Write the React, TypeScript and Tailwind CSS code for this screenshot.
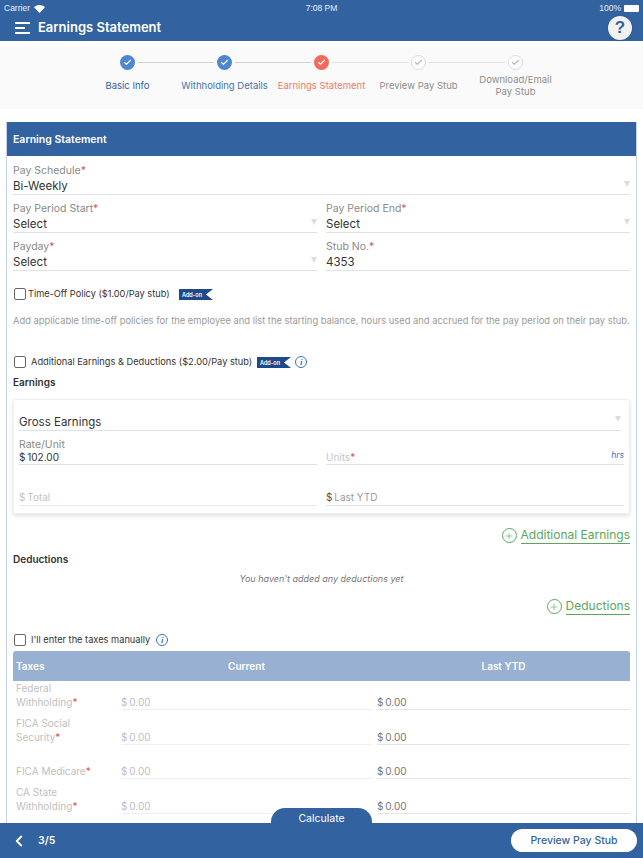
import { Check, ChevronLeft, Plus } from "lucide-react";

const STEPS = [
  { label: "Basic Info", state: "done" },
  { label: "Withholding Details", state: "done" },
  { label: "Earnings Statement", state: "active" },
  { label: "Preview Pay Stub", state: "todo" },
  { label: "Download/Email Pay Stub", state: "todo" },
];

const TAXES = ["Federal Withholding", "FICA Social Security", "FICA Medicare", "CA State Withholding"];

function Req() {
  return <span className="text-[#e0505a]">*</span>;
}

function Caret() {
  return <span className="block w-0 h-0 border-x-[3px] border-x-transparent border-t-[6px] border-t-[#dcdcdc] shrink-0" />;
}

function Field({ label, value, caret }: { label: string; value: string; caret?: boolean }) {
  return (
    <div className="flex-1 min-w-0 mb-[6px]">
      <div className="h-[15px] leading-[15px] text-[10.5px] text-[#8a8a8a]">
        {label}
        <Req />
      </div>
      <div className="flex items-start justify-between h-[17px] border-b border-[#dfe1e6]">
        <span className="text-[11.5px] leading-[16px] text-[#333]">{value}</span>
        {caret && <span className="mt-[3px]"><Caret /></span>}
      </div>
    </div>
  );
}

function Checkbox() {
  return <span className="w-3 h-3 rounded-[2px] border border-[#666] bg-white shrink-0" />;
}

function AddOn() {
  return (
    <svg width="34" height="11" viewBox="0 0 34 11" className="shrink-0">
      <path d="M0 0H34L27 5.5L34 11H0Z" fill="#1f4a8a" />
      <text x="3" y="7.5" fontSize="5.5" fontWeight="600" fill="#fff" fontFamily="Inter, sans-serif">Add-on</text>
    </svg>
  );
}

function InfoIcon() {
  return (
    <span className="w-[12px] h-[12px] rounded-full border border-[#3a74b8] flex items-center justify-center text-[9px] leading-none italic font-bold text-[#3a74b8] font-['Liberation_Serif',serif] shrink-0">
      i
    </span>
  );
}

function AddLink({ label }: { label: string }) {
  return (
    <div className="flex items-center justify-end gap-[4px]">
      <span className="w-[15px] h-[15px] rounded-full border border-[#5ba65b] flex items-center justify-center shrink-0">
        <Plus className="w-[10px] h-[10px] text-[#5ba65b]" strokeWidth={1.5} />
      </span>
      <span className="text-[12px] leading-[16px] text-[#5ba65b] border-b border-[#5ba65b]">{label}</span>
    </div>
  );
}

export default function App() {
  return (
    <div className="relative w-[643px] h-[858px] overflow-hidden bg-white flex flex-col font-['Inter',sans-serif]">
      {/* Status bar + title */}
      <div className="h-[41px] bg-[#32629f] shrink-0 flex flex-col">
        <div className="h-[17px] px-[4px] flex items-center justify-between text-[8.5px] text-white/90 font-['Liberation_Sans',sans-serif]">
          <div className="flex items-center gap-[4px] w-[100px]">
            Carrier
            <svg width="11" height="8" viewBox="0 0 11 8">
              <path d="M5.5 8L0 2.2C3 -.7 8 -.7 11 2.2Z" fill="#fff" />
            </svg>
          </div>
          <span>7:08 PM</span>
          <div className="flex items-center justify-end gap-[3px] w-[100px]">
            100%
            <span className="w-[15px] h-[7px] rounded-[1px] bg-white" />
          </div>
        </div>
        <div className="flex-1 flex items-start pl-[15px] pr-[11px]">
          <div className="flex flex-col gap-[3px] w-[15px] mt-[5px]">
            <span className="h-[2px] w-[15px] bg-white" />
            <span className="h-[2px] w-[10px] bg-white" />
            <span className="h-[2px] w-[15px] bg-white" />
          </div>
          <span className="ml-[8px] text-[13px] leading-[20px] font-semibold text-white">Earnings Statement</span>
          <span className="ml-auto relative z-10 mt-[-1px] w-[24px] h-[24px] rounded-full bg-[#f2f2f2] shadow flex items-center justify-center text-[17px] font-bold text-[#32629f] font-['Liberation_Sans',sans-serif]">
            ?
          </span>
        </div>
      </div>

      {/* Stepper */}
      <div className="mt-[6px] h-[62px] bg-[#fafafa] shrink-0 flex justify-center pt-[8px]">
        {STEPS.map((s, i) => (
          <div key={s.label} className="w-[97px] flex flex-col items-center">
            <div className="w-full flex items-center">
              <span className={`flex-1 h-px ${i === 0 ? "" : i < 3 ? "bg-[#cfcfcf]" : "bg-[#e2e2e2]"} mr-[3px]`} />
              <span
                className={`w-[15px] h-[15px] rounded-full flex items-center justify-center shrink-0 ${
                  s.state === "done"
                    ? "bg-[#4f86d0]"
                    : s.state === "active"
                      ? "bg-[#f4695c]"
                      : "bg-white border border-[#dcdcdc]"
                }`}
              >
                <Check
                  className={`w-[9px] h-[9px] ${s.state === "todo" ? "text-[#b5b5b5]" : "text-white"}`}
                  strokeWidth={3}
                />
              </span>
              <span className={`flex-1 h-px ${i === 4 ? "" : i < 2 ? "bg-[#cfcfcf]" : "bg-[#e2e2e2]"} ml-[3px]`} />
            </div>
            <div
              className={`h-[24px] mt-[4px] flex items-center justify-center text-center text-[9.5px] leading-[12px] ${
                s.state === "done"
                  ? i === 0
                    ? "text-[#32629f]"
                    : "text-[#4a72a8]"
                  : s.state === "active"
                    ? "text-[#ee7a68]"
                    : "text-[#8d8d8d]"
              } ${i === 4 ? "w-[80px]" : "whitespace-nowrap"}`}
            >
              {s.label}
            </div>
          </div>
        ))}
      </div>

      {/* Card */}
      <div className="flex-1 min-h-0 overflow-hidden px-[6px] pt-[13px]">
        <div className="border-x border-[#c5d3e8] h-[800px]">
          <div className="h-[34px] bg-[#32629f] flex items-center pl-[6px] pt-[2px] text-[10.5px] font-semibold text-white">
            Earning Statement
          </div>
          <div className="px-[6px] pt-[7px]">
            <Field label="Pay Schedule" value="Bi-Weekly" caret />
            <div className="flex gap-[9px]">
              <Field label="Pay Period Start" value="Select" caret />
              <Field label="Pay Period End" value="Select" caret />
            </div>
            <div className="flex gap-[9px]">
              <Field label="Payday" value="Select" caret />
              <Field label="Stub No." value="4353" />
            </div>

            <div className="flex items-center mt-[10px] h-[14px] pl-[1px] text-[9.2px] text-[#333]">
              <Checkbox />
              <span className="ml-[2px]">Time-Off Policy ($1.00/Pay stub)</span>
              <span className="ml-[9px]"><AddOn /></span>
            </div>
            <p className="mt-[13px] text-[9.37px] leading-[14px] text-[#9a9a9a] whitespace-nowrap">
              Add applicable time-off policies for the employee and list the starting balance, hours used and accrued for the pay period on their pay stub.
            </p>
            <div className="flex items-center mt-[27px] h-[14px] pl-[1px] text-[9.25px] text-[#333]">
              <Checkbox />
              <span className="ml-[5px]">Additional Earnings &amp; Deductions ($2.00/Pay stub)</span>
              <span className="ml-[5px]"><AddOn /></span>
              <span className="ml-[4px]"><InfoIcon /></span>
            </div>
            <div className="mt-[6px] h-[14px] leading-[14px] text-[10px] font-semibold text-[#333]">Earnings</div>

            {/* Earnings box */}
            <div className="mt-[10px] h-[115px] rounded-[2px] border border-[#f0f0f0] shadow-[0_2px_4px_rgba(0,0,0,0.12)] px-[5px] pt-[13px]">
              <div className="flex items-start justify-between h-[18px] border-b border-[#dfe1e6] mr-[3px]">
                <span className="text-[11.5px] leading-[18px] text-[#333]">Gross Earnings</span>
                <span className="mt-[3px]"><Caret /></span>
              </div>
              <div className="flex gap-[9px] mt-[7px]">
                <div className="flex-1">
                  <div className="text-[10.5px] leading-[13px] text-[#8a8a8a]">Rate/Unit</div>
                  <div className="h-[14px] border-b border-[#dfe1e6] text-[10px] leading-[13px] text-[#333]">$&#8201;102.00</div>
                </div>
                <div className="flex-1 flex items-end justify-between h-[27px] border-b border-[#dfe1e6]">
                  <span className="text-[10px] leading-[13px] text-[#c4c4c4]">
                    Units
                    <Req />
                  </span>
                  <span className="text-[8.5px] italic text-[#3a74b8] mb-[2px]">hrs</span>
                </div>
              </div>
              <div className="flex gap-[9px] mt-[25px]">
                <div className="flex-1 h-[16px] border-b border-[#e8e8e8] text-[10px] leading-[14px] text-[#c4c4c4]">$&#8201;Total</div>
                <div className="flex-1 h-[16px] border-b border-[#dfe1e6] text-[10px] leading-[14px] text-[#9a9a9a]">
                  <span className="text-[#555]">$</span>&#8201;Last YTD
                </div>
              </div>
            </div>

            <div className="mt-[13px]"><AddLink label="Additional Earnings" /></div>
            <div className="mt-[8px] h-[14px] leading-[14px] text-[10px] font-semibold text-[#333]">Deductions</div>
            <div className="mt-[6px] text-center text-[9px] leading-[14px] italic text-[#777]">You haven't added any deductions yet</div>
            <div className="mt-[12px]"><AddLink label="Deductions" /></div>

            <div className="flex items-center mt-[18px] h-[14px] pl-[1px] text-[9.25px] text-[#333]">
              <Checkbox />
              <span className="ml-[5px]">I'll enter the taxes manually</span>
              <span className="ml-[6px]"><InfoIcon /></span>
            </div>

            {/* Taxes table */}
            <div className="mt-[4px]">
              <div className="h-[30px] rounded-t-[3px] bg-[#98b0d2] flex items-center text-[10px] font-semibold text-white">
                <span className="w-[108px] pl-[3px]">Taxes</span>
                <span className="w-[251px] text-center">Current</span>
                <span className="flex-1 text-center pl-[5px]">Last YTD</span>
              </div>
              {TAXES.map((name, i) => (
                <div key={name} className={`flex items-end pl-[3px] ${i === 0 ? "h-[29px]" : "h-[34.5px]"}`}>
                  <div className="w-[105px] text-[10px] leading-[14px] text-[#c0c0c0] pb-[1px]">
                    <div className="w-[80px]">
                      {name}
                      <Req />
                    </div>
                  </div>
                  <div className="w-[251px] h-[15px] border-b border-[#f0f0f0] text-[10px] leading-[15px] text-[#c0c0c0]">$&#8201;0.00</div>
                  <div className="flex-1 ml-[5px] h-[15px] border-b border-[#e4e4e4] text-[10px] leading-[15px] text-[#777]">$&#8201;0.00</div>
                </div>
              ))}
            </div>
          </div>
        </div>
      </div>

      {/* Footer */}
      <div className="h-[35px] bg-[#32629f] shrink-0 flex items-center pl-[10px] pr-[6px] text-white">
        <ChevronLeft className="w-[18px] h-[18px]" strokeWidth={2.5} />
        <span className="ml-[10px] text-[10.5px] font-semibold">3/5</span>
        <span className="ml-auto w-[126px] h-[23px] rounded-full bg-white flex items-center justify-center text-[10.5px] font-medium text-[#32629f]">
          Preview Pay Stub
        </span>
      </div>
      <div className="absolute left-[271px] top-[808px] w-[101px] h-[16px] rounded-t-[14px] bg-[#32629f] flex items-center justify-center pt-[5px] text-[10.5px] text-white">
        Calculate
      </div>
    </div>
  );
}
